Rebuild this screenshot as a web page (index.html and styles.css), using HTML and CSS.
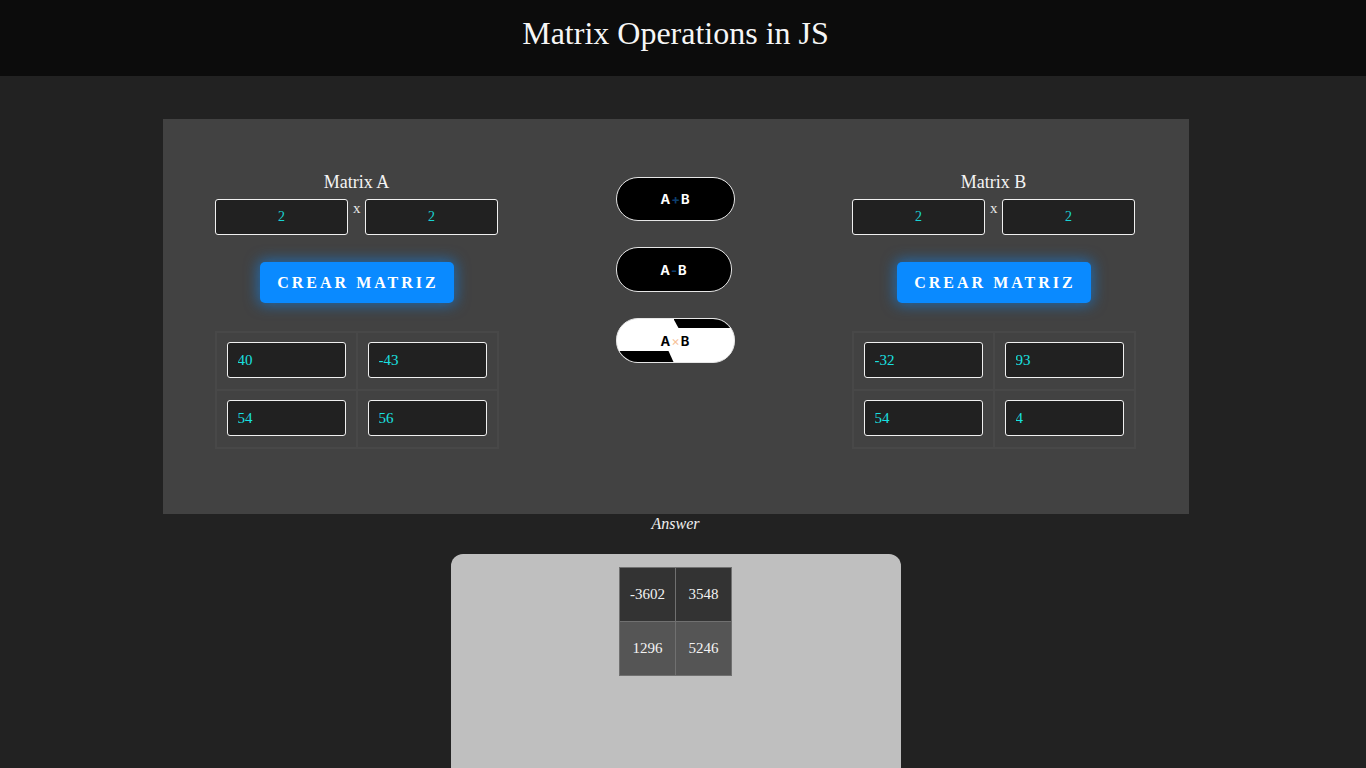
FILE: index.html
```html
<!DOCTYPE html>
<html lang="en">
<head>
<meta charset="utf-8">
<title>Matrix Operations in JS</title>
<link rel="stylesheet" href="styles.css">
</head>
<body>
<header class="top">
  <h1 class="title">Matrix Operations in JS</h1>
</header>
<main>
  <section class="panel">
    <div class="matrix">
      <div class="label">Matrix A</div>
      <div class="dims">
        <input class="dim" value="2">
        <span class="times">x</span>
        <input class="dim" value="2">
      </div>
      <button class="create">CREAR MATRIZ</button>
      <div class="grid">
        <div class="cell"><input class="num" value="40"></div>
        <div class="cell"><input class="num" value="-43"></div>
        <div class="cell"><input class="num" value="54"></div>
        <div class="cell"><input class="num" value="56"></div>
      </div>
    </div>
    <div class="ops">
      <button class="op">A<span class="sign plus">+</span>B</button>
      <button class="op op-narrow">A<span class="sign minus">-</span>B</button>
      <button class="op op-white">A<span class="sign mult">×</span>B</button>
    </div>
    <div class="matrix">
      <div class="label">Matrix B</div>
      <div class="dims">
        <input class="dim" value="2">
        <span class="times">x</span>
        <input class="dim" value="2">
      </div>
      <button class="create">CREAR MATRIZ</button>
      <div class="grid">
        <div class="cell"><input class="num" value="-32"></div>
        <div class="cell"><input class="num" value="93"></div>
        <div class="cell"><input class="num" value="54"></div>
        <div class="cell"><input class="num" value="4"></div>
      </div>
    </div>
  </section>
  <p class="answer-label">Answer</p>
  <section class="answer">
    <table class="result">
      <tr class="row-dark"><td>-3602</td><td>3548</td></tr>
      <tr class="row-mid"><td>1296</td><td>5246</td></tr>
    </table>
  </section>
</main>
</body>
</html>
```
FILE: styles.css
```css
* { box-sizing: border-box; }
html, body { margin: 0; padding: 0; }
body {
  background: #222222;
  color: #f2f2f2;
  font-family: "Liberation Serif", "Times New Roman", serif;
  padding-right: 15px;
}
.top {
  background: #0c0c0c;
  height: 76px;
  padding-top: 15px;
  margin-right: -15px;
  padding-right: 15px;
}
.title {
  margin: 0;
  text-align: center;
  font-weight: normal;
  font-size: 32px;
  line-height: 36px;
  color: #f6f6f6;
}
main {
  display: flex;
  flex-direction: column;
  align-items: center;
  padding-bottom: 13px;
}
.panel {
  margin-top: 43px;
  width: 1026px;
  height: 395px;
  background: #424242;
  display: flex;
  align-items: flex-start;
  gap: 117px;
  padding: 53px 52px 0 52px;
}
.matrix {
  width: 284px;
  display: flex;
  flex-direction: column;
  align-items: center;
}
.label {
  font-size: 18px;
  line-height: 20px;
  color: #f4f4f4;
}
.dims {
  margin-top: 7px;
  display: flex;
  align-items: flex-start;
  gap: 5px;
}
.dim {
  width: 133px;
  height: 36px;
  background: #212121;
  border: 1px solid #f0f0f0;
  border-radius: 3px;
  color: #19d3d3;
  text-align: center;
  font-family: "Liberation Serif", serif;
  font-size: 14px;
  padding: 0;
}
.times {
  font-size: 15px;
  line-height: 18px;
  width: 7px;
  text-align: center;
  color: #e8e8e8;
}
.create {
  margin-top: 27px;
  width: 194px;
  height: 41px;
  background: #0a8aff;
  border: none;
  border-radius: 5px;
  color: #ffffff;
  font-family: "Liberation Serif", serif;
  font-size: 16px;
  font-weight: bold;
  letter-spacing: 3px;
  padding: 0 0 0 3px;
  box-shadow: 0 0 14px 2px rgba(10, 138, 255, 0.55);
}
.grid {
  margin-top: 28px;
  display: grid;
  grid-template-columns: 141px 141px;
  border: 1px solid #484848;
}
.cell {
  border: 1px solid #484848;
  padding: 9px 10px 11px 10px;
}
.num {
  display: block;
  width: 119px;
  height: 36px;
  background: #212121;
  border: 1px solid #f0f0f0;
  border-radius: 3px;
  color: #19e0e0;
  font-family: "Liberation Serif", serif;
  font-size: 15px;
  padding: 0 0 0 10px;
}
.ops {
  margin-top: 5px;
  width: 119px;
  display: flex;
  flex-direction: column;
  gap: 26px;
}
.op {
  position: relative;
  overflow: hidden;
  width: 119px;
  height: 44px;
  border-radius: 22px;
  border: 1px solid #e6e6e6;
  background: #000000;
  color: #ffffff;
  font-family: "Inter", "Liberation Sans", sans-serif;
  font-weight: 700;
  font-size: 13px;
  padding: 0;
}
.op-narrow { width: 116px; height: 45px; }
.op-white {
  background: #ffffff;
  color: #000000;
  height: 45px;
}
.op-white::before,
.op-white::after {
  content: "";
  position: absolute;
  background: #000000;
}
.op-white::before {
  top: 0;
  right: 0;
  width: 60px;
  height: 9px;
  clip-path: polygon(0 0, 100% 0, 100% 100%, 5px 100%);
}
.op-white::after {
  bottom: 0;
  left: 0;
  width: 57px;
  height: 11px;
  clip-path: polygon(0 0, 52px 0, 100% 100%, 0 100%);
}
.sign { display: inline-block; margin: 0 1px; }
.plus { color: #0d3e6e; }
.minus { color: #0d3e6e; }
.mult { color: #f6c39a; font-weight: 400; }
.answer-label {
  margin: 0;
  font-style: italic;
  font-size: 16px;
  line-height: 20px;
  color: #f0f0f0;
}
.answer {
  margin-top: 20px;
  width: 450px;
  height: 250px;
  background: #bfbfbf;
  border-radius: 12px;
  padding-top: 13px;
  display: flex;
  justify-content: center;
  align-items: flex-start;
}
.result {
  border-collapse: collapse;
  border: 1px solid #707070;
}
.result td {
  border: 1px solid #707070;
  width: 56px;
  height: 54px;
  text-align: center;
  font-size: 15px;
  color: #f2f2f2;
  padding: 0;
}
.row-dark td { background: #333333; }
.row-mid td { background: #555555; }
```
